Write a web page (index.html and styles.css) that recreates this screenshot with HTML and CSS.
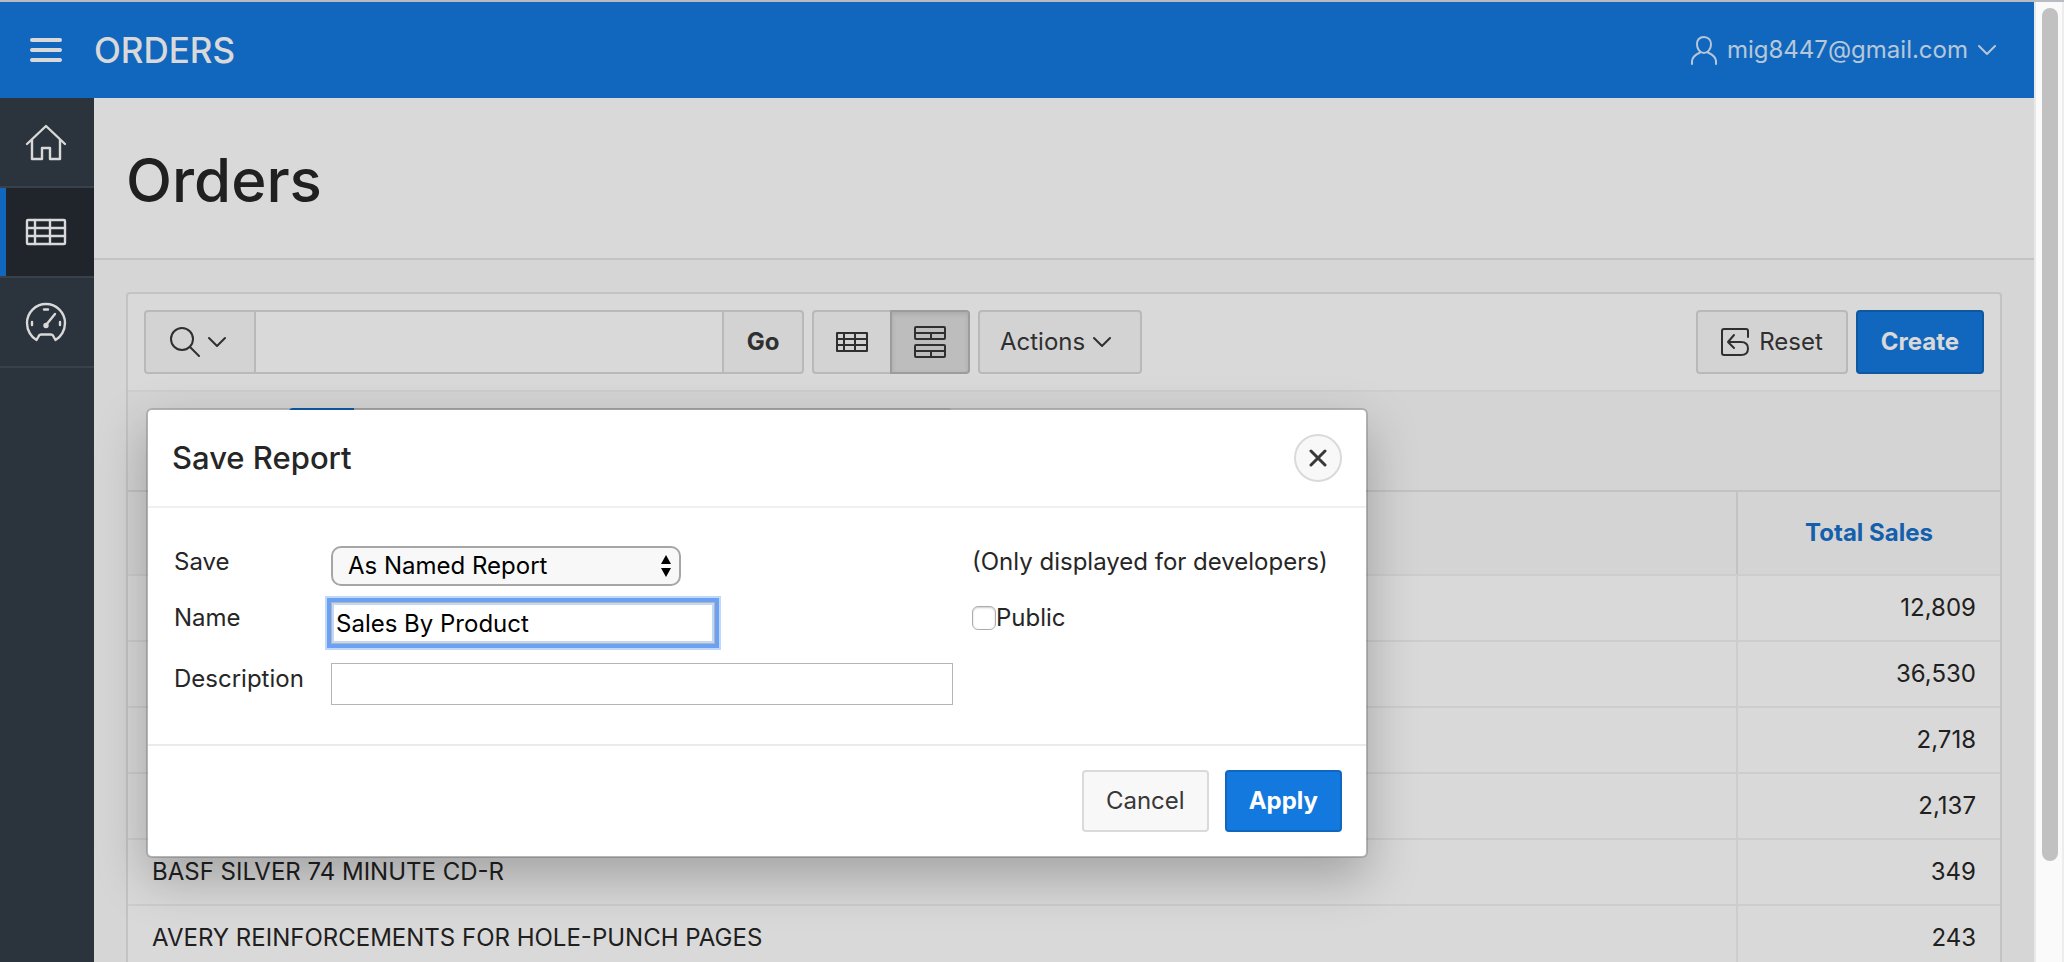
FILE: index.html
```html
<!DOCTYPE html>
<html lang="en">
<head>
<meta charset="utf-8">
<title>Orders</title>
<link rel="stylesheet" href="styles.css">
</head>
<body>
<svg class="sprite" aria-hidden="true">
  <symbol id="i-down" viewBox="0 0 18 12"><path d="M1 2 9 10 17 2"/></symbol>
</svg>
<div class="window">
  <div class="app">
    <header class="topbar">
      <button class="menu-btn" aria-label="Toggle menu">
        <svg width="32" height="26" viewBox="0 0 32 26"><path d="M2 3H30M2 13H30M2 23H30" stroke-width="4"/></svg>
      </button>
      <a class="brand" href="#">ORDERS</a>
      <button class="user">
        <svg width="26" height="30" viewBox="0 0 26 30"><path d="M13 2c4.500 0 7 3.500 7 7.500S17 18 13 18 6 14 6 9.500 8.500 2 13 2ZM1 29v-3c0-4 3-6 8-8.500M25 29v-3c0-4-3-6-8-8.500"/></svg>
        <span>mig8447@gmail.com</span>
        <svg width="18" height="12"><use href="#i-down"/></svg>
      </button>
    </header>
    <div class="main">
      <nav class="side">
        <a href="#" aria-label="Home"><svg width="40" height="36" viewBox="0 0 40 36"><path d="M1 20 20 2 39 20M6 16V35H16V24H24V35H34V16"/></svg></a>
        <a href="#" class="current" aria-label="Orders"><svg width="40" height="26" viewBox="0 0 40 26"><rect x="1" y="1" width="38" height="24" rx="1"/><path d="M1 9H39M1 17H39M9 1V25M24 1V25"/></svg></a>
        <a href="#" aria-label="Dashboard"><svg width="40" height="38" viewBox="0 0 40 38"><path d="M10.500 37C5 34 1 27.500 1 20A19 19 0 0 1 39 20C39 27.500 35 34 29.500 37L27.500 33.500C27 32 26 31.500 25 31.500H15C14 31.500 13 32 12.500 33.500ZM20 22 29 11M6 19V22M34 19V22M18 6.500H22"/><circle cx="20" cy="22.500" r="1.500"/></svg></a>
      </nav>
      <main class="content">
        <div class="title"><h1>Orders</h1></div>
        <section class="report">
          <div class="toolbar">
            <div class="search">
              <button class="btn" aria-label="Select columns to search">
                <svg width="30" height="30" viewBox="0 0 30 30"><circle cx="12" cy="12" r="11"/><path d="M20 20 29 29"/></svg>
                <svg width="18" height="12"><use href="#i-down"/></svg>
              </button>
              <input type="text" aria-label="Search report">
              <button class="btn go">Go</button>
            </div>
            <div class="views">
              <button class="btn" aria-label="View report"><svg width="32" height="20" viewBox="0 0 32 20"><path d="M1 1H31V19H1ZM1 7H31M1 13H31M8 1V19M19 1V19"/></svg></button>
              <button class="btn pressed" aria-label="View group by" aria-pressed="true"><svg width="32" height="32" viewBox="0 0 32 32"><rect x="1" y="1" width="30" height="12" rx="1"/><rect x="1" y="19" width="30" height="12" rx="1"/><path d="M1 7H31M17 7V13M1 25H31M17 25V31"/></svg></button>
            </div>
            <button class="btn actions">Actions <svg width="18" height="12"><use href="#i-down"/></svg></button>
            <span class="spacer"></span>
            <button class="btn reset"><svg width="28" height="28" viewBox="0 0 28 28"><path d="M27 9V3Q27 1 25 1H3Q1 1 1 3V25Q1 27 3 27H20C25 27 27 24 27 20.500S25 14 20 14H7M13 7 7 14 13 20"/></svg>Reset</button>
            <button class="btn hot">Create</button>
          </div>
          <div class="settings"><div class="tabs"></div></div>
          <table>
            <thead><tr><th></th><th><a href="#">Total Sales</a></th></tr></thead>
            <tbody>
              <tr><td></td><td>12,809</td></tr>
              <tr><td></td><td>36,530</td></tr>
              <tr><td></td><td>2,718</td></tr>
              <tr><td></td><td>2,137</td></tr>
              <tr><td>BASF SILVER 74 MINUTE CD-R</td><td>349</td></tr>
              <tr><td>AVERY REINFORCEMENTS FOR HOLE-PUNCH PAGES</td><td>243</td></tr>
            </tbody>
          </table>
        </section>
      </main>
    </div>
    <div class="overlay"></div>
    <div class="dialog" role="dialog" aria-labelledby="dlg-title">
      <div class="dlg-head">
        <h2 id="dlg-title">Save Report</h2>
        <button class="close" aria-label="Close"><svg width="18" height="18" viewBox="0 0 18 18"><path d="M2 2 16 16M16 2 2 16" stroke-width="3"/></svg></button>
      </div>
      <form class="dlg-body">
        <label for="save">Save</label>
        <div class="select-wrap">
          <select id="save"><option>As Named Report</option></select>
          <svg width="12" height="26" viewBox="0 0 12 26"><path d="M6 2 11 11H1ZM6 24 11 15H1Z"/></svg>
        </div>
        <span>(Only displayed for developers)</span>
        <label for="name">Name</label>
        <input id="name" class="name" type="text" value="Sales By Product">
        <div class="check"><input type="checkbox" id="public"><label for="public">Public</label></div>
        <label for="desc">Description</label>
        <input id="desc" class="desc" type="text">
      </form>
      <div class="dlg-foot">
        <button class="btn">Cancel</button>
        <button class="btn hot">Apply</button>
      </div>
    </div>
  </div>
  <div class="scroll" aria-hidden="true"><div class="thumb"></div></div>
</div>
</body>
</html>
```
FILE: styles.css
```css
* { box-sizing: border-box; }
body { margin: 0; font-family: Inter, "Liberation Sans", sans-serif; font-size: 24px; line-height: 32px; color: #262626; }
h1, h2 { margin: 0; font-weight: 500; }
a { text-decoration: none; color: inherit; }
button, input, select { font: inherit; color: inherit; margin: 0; }
svg { fill: none; stroke: currentColor; stroke-width: 2; stroke-linecap: round; stroke-linejoin: round; flex: none; }
.sprite { position: absolute; width: 0; height: 0; }

.window { height: 100vh; display: flex; overflow: hidden; border-top: 2px solid #b8bcc2; }
.app { flex: 1; min-width: 0; display: flex; flex-direction: column; position: relative; overflow: hidden; }
.scroll { width: 30px; background: #fafafa; border-left: 2px solid #e8e8e8; border-right: 2px solid #ededed; padding: 6px 4px 0 6px; }
.thumb { width: 16px; height: 89.4%; border-radius: 8px; background: #c1c1c1; }

.topbar { flex: none; height: 96px; background: #1479de; color: #fff; display: flex; align-items: center; padding: 0 38px 0 30px; }
.menu-btn, .user { background: none; border: 0; padding: 0; display: flex; align-items: center; }
.brand { margin-left: 32px; font-size: 35px; line-height: 40px; font-weight: 500; }
.user { margin-left: auto; gap: 10px; color: #d6eaff; }

.main { flex: 1; display: flex; min-height: 0; }
.side { flex: none; width: 94px; background: #333d47; color: #fff; }
.side a { height: 90px; padding-right: 2px; border-bottom: 2px solid #424d58; display: flex; align-items: center; justify-content: center; }
.side svg { stroke-width: 2.4; overflow: visible; }
.side .current { background: #262b33; box-shadow: inset 6px 0 #1479de; }
.content { flex: 1; min-width: 0; background: #fcfcfc; }
.title { background: #fff; border-bottom: 2px solid #e5e5e5; padding: 42px 32px 38px; }
h1 { font-size: 60px; line-height: 80px; }

.report { margin: 32px; border: 2px solid #e5e5e5; border-radius: 4px; background: #fff; }
.toolbar { display: flex; gap: 8px; padding: 16px; border-bottom: 2px solid #f2f2f2; }
.btn { height: 64px; padding: 0 22px; border: 2px solid #dadada; border-radius: 4px; background: #f8f8f8; color: #383838; display: flex; align-items: center; justify-content: center; gap: 10px; }
.hot { background: #1479de; border-color: #1068be; color: #fff; font-weight: 700; }
.search, .views { display: flex; }
.search .btn:first-child { width: 112px; padding: 0 26px 0 22px; gap: 8px; border-radius: 4px 0 0 4px; }
.search input { width: 466px; border: solid #dadada; border-width: 2px 0; background: #fff; padding: 0 8px; }
.go { width: 82px; font-weight: 700; border-radius: 0 4px 4px 0; }
.views .btn { width: 78px; border-right: 0; border-radius: 4px 0 0 4px; }
.views .pressed { width: 80px; background: #dedede; border: 2px solid #b8b8b8; border-radius: 0 4px 4px 0; box-shadow: inset 0 2px 4px #c8c8c8; }
.actions { width: 164px; padding: 0 20px; gap: 8px; justify-content: flex-start; }
.reset { width: 152px; padding: 0; }
.toolbar .hot { width: 128px; padding: 0; }
.spacer { flex: 1; }
.settings { height: 98px; padding: 16px 161px; background: #fafafa; }
.tabs { width: 663px; height: 64px; background: linear-gradient(90deg, #1479de 65px, #e0e0e0 65px); border-radius: 4px; }

table { width: 100%; border-collapse: separate; border-spacing: 0; }
th { height: 84px; padding: 0; background: #fafafa; border-top: 2px solid #e5e5e5; font-weight: 700; color: #1871cc; }
th:last-child { width: 264px; border-left: 2px solid #e5e5e5; }
td { height: 66px; padding: 0 24px; border-top: 2px solid #f1f1f1; }
td:last-child { text-align: right; border-left: 2px solid #f1f1f1; }

.overlay { position: absolute; inset: 0; background: rgba(0, 0, 0, .15); }
.dialog { position: absolute; left: 146px; top: 406px; width: 1222px; border: 2px solid rgba(0, 0, 0, .16); border-radius: 6px; background: #fff; background-clip: padding-box; box-shadow: 0 20px 50px rgba(0, 0, 0, .25); }
.dlg-head { display: flex; align-items: center; justify-content: space-between; padding: 24px; border-bottom: 2px solid #f0f0f0; }
h2 { font-size: 31px; line-height: 40px; }
.close { width: 48px; height: 48px; padding: 0; border: 2px solid #dadada; border-radius: 50%; background: #f8f8f8; color: #383838; display: flex; align-items: center; justify-content: center; }
.dlg-body { display: grid; grid-template-columns: 157px 641px auto; grid-template-rows: 56px 61px 45px; padding: 38px 26px 36px; align-items: start; }
.select-wrap { width: 350px; position: relative; }
select { appearance: none; width: 100%; height: 40px; padding: 0 15px; border: 2px solid #a6a6a6; border-radius: 10px; background: #f8f8f8; color: #000; }
.select-wrap svg { position: absolute; right: 9px; top: 7px; fill: #000; stroke: none; }
.dlg-body input[type="text"] { height: 42px; padding: 0 4px; border: 1px solid #b5b5b5; background: #fff; color: #000; }
.dlg-body .name { width: 384px; border-color: #5089e0; outline: 4px solid #6ba1f3; outline-offset: 0; box-shadow: inset 0 0 0 2px #c2d8fa, 0 0 0 6px #c2d8fa; }
.dlg-body .desc { width: 622px; }
.check { display: flex; align-items: center; }
.check input { appearance: none; width: 24px; height: 24px; border: 1px solid #adadad; border-radius: 6px; background: #fff; box-shadow: inset 0 1px 2px #ccc; }
.dlg-foot { display: flex; justify-content: flex-end; gap: 16px; padding: 24px; border-top: 2px solid #ebebeb; }
.dlg-foot .btn { height: 62px; }
```
